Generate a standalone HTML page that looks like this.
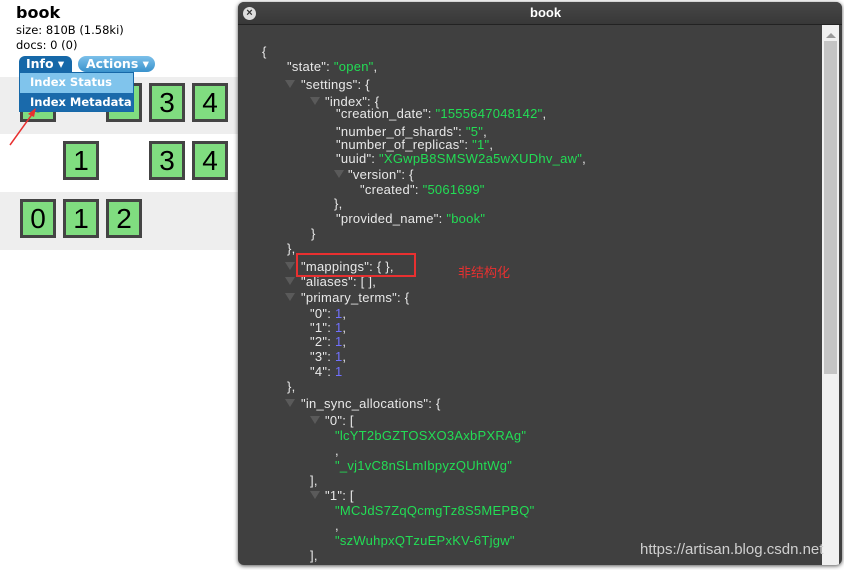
<!DOCTYPE html>
<html><head><meta charset="utf-8"><style>
body{margin:0;width:844px;height:570px;background:#fff;position:relative;overflow:hidden;font-family:"Liberation Sans","DejaVu Sans",sans-serif}
.a{position:absolute;white-space:nowrap}
.row{position:absolute;left:0;width:238px}
.blk{position:absolute;width:30px;height:33px;background:#80dd80;border:3px solid #444;font-size:28px;line-height:33px;text-align:center;color:#000}
.dlg{position:absolute;left:238px;top:2px;width:604px;height:563px;background:#404040;border-radius:6px;box-shadow:0 1px 4px #555;overflow:hidden}
.t{position:absolute;font-size:13px;color:#e8e8e8;white-space:pre;line-height:15px;letter-spacing:0.25px;margin-top:1px}
.s{color:#22dd55}.n{color:#7070ff}
.tri{position:absolute;width:0;height:0;border-left:5px solid transparent;border-right:5px solid transparent;border-top:8px solid #5a5a5a}
.v{font-family:"DejaVu Sans",sans-serif}
</style></head><body>
<div class="a v" style="left:16px;top:3px;font-size:16px;font-weight:bold">book</div>
<div class="a v" style="left:16px;top:23px;font-size:11.5px">size: 810B (1.58ki)</div>
<div class="a v" style="left:16px;top:38px;font-size:11.5px">docs: 0 (0)</div>
<div class="row" style="top:77px;height:57px;background:#eee"></div>
<div class="row" style="top:192px;height:58px;background:#eee"></div>
<div class="blk" style="left:20px;top:83px">0</div>
<div class="blk" style="left:106px;top:83px">2</div>
<div class="blk" style="left:149px;top:83px">3</div>
<div class="blk" style="left:192px;top:83px">4</div>
<div class="blk" style="left:63px;top:141px">1</div>
<div class="blk" style="left:149px;top:141px">3</div>
<div class="blk" style="left:192px;top:141px">4</div>
<div class="blk" style="left:20px;top:199px">0</div>
<div class="blk" style="left:63px;top:199px">1</div>
<div class="blk" style="left:106px;top:199px">2</div>
<div class="a v" style="left:19px;top:56px;width:53px;height:16px;background:#1668a8;border-radius:6px 6px 0 0;color:#fff;font-size:12.5px;font-weight:bold;line-height:16px;text-indent:7px">Info ▾</div>
<div class="a v" style="left:78px;top:56px;width:77px;height:16px;background:linear-gradient(#7cc0ea,#3a92cc);border-radius:8px;color:#fff;font-size:12.5px;font-weight:bold;line-height:16px;text-indent:8px">Actions ▾</div>
<div class="a" style="left:19px;top:72px;width:115px;height:40px;border:1px solid #1668a8;box-sizing:border-box;background:#80c4ec"></div>
<div class="a v" style="left:20px;top:73px;width:113px;height:19px;background:#80c4ec;color:#fff;font-size:11.5px;font-weight:bold;line-height:19px;text-indent:10px">Index Status</div>
<div class="a v" style="left:20px;top:93px;width:113px;height:18px;background:#1a6aab;color:#fff;font-size:11.5px;font-weight:bold;line-height:18px;text-indent:10px;overflow:hidden">Index Metadata</div>
<svg class="a" style="left:0;top:0" width="238" height="250"><line x1="10" y1="145" x2="33" y2="113" stroke="#e83030" stroke-width="1.5"/><polygon points="36,108 28,114 34,117" fill="#e83030"/></svg>
<div class="dlg">
<div class="a" style="left:0;top:0;width:604px;height:22px;background:linear-gradient(#474747,#383838);border-bottom:1px solid #222"></div>
<div class="a" style="left:5px;top:5px;width:13px;height:13px;border-radius:50%;background:#ddd;color:#333;font-size:11px;line-height:13px;text-align:center;font-weight:bold">×</div>
<div class="a" style="left:292px;top:3px;color:#fff;font-weight:bold;font-size:13px">book</div>
<div class="a" style="left:584px;top:23px;width:17px;height:540px;background:#f0f0f0"></div>
<div class="a" style="left:586px;top:39px;width:13px;height:333px;background:#c4c4c4"></div>
<div class="tri" style="left:588px;top:31px;border-top:none;border-bottom:5px solid #999"></div>
</div>
<div class="a" style="left:238px;top:0;width:0;height:0">
<div class="t" style="left:24px;top:43px">{</div>
<div class="t" style="left:49px;top:58px">"state": <span class="s">"open"</span>,</div>
<div class="tri" style="left:47px;top:80px"></div><div class="t" style="left:63px;top:76px">"settings": {</div>
<div class="tri" style="left:72px;top:97px"></div><div class="t" style="left:87px;top:93px">"index": {</div>
<div class="t" style="left:98px;top:105px">"creation_date": <span class="s">"1555647048142"</span>,</div>
<div class="t" style="left:98px;top:123px">"number_of_shards": <span class="s">"5"</span>,</div>
<div class="t" style="left:98px;top:136px">"number_of_replicas": <span class="s">"1"</span>,</div>
<div class="t" style="left:98px;top:150px">"uuid": <span class="s">"XGwpB8SMSW2a5wXUDhv_aw"</span>,</div>
<div class="tri" style="left:96px;top:170px"></div><div class="t" style="left:110px;top:166px">"version": {</div>
<div class="t" style="left:122px;top:181px">"created": <span class="s">"5061699"</span></div>
<div class="t" style="left:96px;top:195px">},</div>
<div class="t" style="left:98px;top:210px">"provided_name": <span class="s">"book"</span></div>
<div class="t" style="left:73px;top:225px">}</div>
<div class="t" style="left:49px;top:240px">},</div>
<div class="tri" style="left:47px;top:262px"></div><div class="t" style="left:63px;top:258px">"mappings": { },</div>
<div class="tri" style="left:47px;top:277px"></div><div class="t" style="left:63px;top:273px">"aliases": [ ],</div>
<div class="tri" style="left:47px;top:293px"></div><div class="t" style="left:63px;top:289px">"primary_terms": {</div>
<div class="t" style="left:72px;top:305px">"0": <span class="n">1</span>,</div>
<div class="t" style="left:72px;top:319px">"1": <span class="n">1</span>,</div>
<div class="t" style="left:72px;top:333px">"2": <span class="n">1</span>,</div>
<div class="t" style="left:72px;top:348px">"3": <span class="n">1</span>,</div>
<div class="t" style="left:72px;top:363px">"4": <span class="n">1</span></div>
<div class="t" style="left:49px;top:378px">},</div>
<div class="tri" style="left:47px;top:399px"></div><div class="t" style="left:63px;top:395px">"in_sync_allocations": {</div>
<div class="tri" style="left:72px;top:416px"></div><div class="t" style="left:87px;top:412px">"0": [</div>
<div class="t s" style="left:97px;top:427px">"lcYT2bGZTOSXO3AxbPXRAg"</div>
<div class="t" style="left:97px;top:442px">,</div>
<div class="t s" style="left:97px;top:457px">"_vj1vC8nSLmIbpyzQUhtWg"</div>
<div class="t" style="left:72px;top:472px">],</div>
<div class="tri" style="left:72px;top:491px"></div><div class="t" style="left:87px;top:487px">"1": [</div>
<div class="t s" style="left:97px;top:502px">"MCJdS7ZqQcmgTz8S5MEPBQ"</div>
<div class="t" style="left:97px;top:517px">,</div>
<div class="t s" style="left:97px;top:532px">"szWuhpxQTzuEPxKV-6Tjgw"</div>
<div class="t" style="left:72px;top:547px">],</div>
</div>
<div class="a" style="left:296px;top:253px;width:116px;height:20px;border:2px solid #e83030"></div>
<div class="a" style="left:458px;top:262px;color:#e83030;font-size:13px;font-family:'Liberation Sans','Noto Sans CJK SC',sans-serif">非结构化</div>
<div class="a" style="left:640px;top:541px;color:#cfcfcf;font-size:15px">https://artisan.blog.csdn.net</div>
</body></html>
